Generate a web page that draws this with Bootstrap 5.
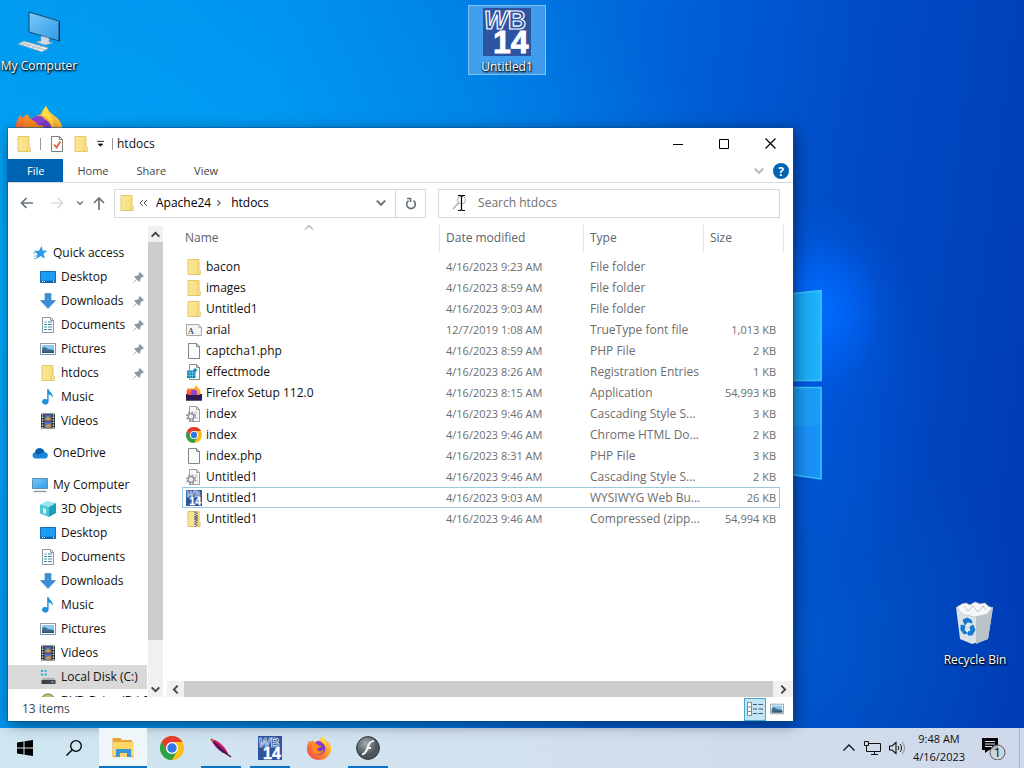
<!DOCTYPE html>
<html lang="en">
<head>
<meta charset="utf-8">
<meta name="viewport" content="width=device-width, initial-scale=1">
<title>htdocs</title>
<link href="https://cdn.jsdelivr.net/npm/bootstrap@5.3.0/dist/css/bootstrap.min.css" rel="stylesheet">
<style>
  body { font-family: "Open Sans", "Noto Sans", sans-serif; font-size: 12px; line-height: 16px; color: #111; }
  a { color: inherit; text-decoration: none; }
  svg { display: block; flex: none; }
  .i16 { width: 16px; height: 16px; }
  .i24 { width: 24px; height: 24px; }
  .i48 { width: 48px; height: 48px; }
  .plain { border: 0; padding: 0; background: none; color: inherit; display: flex; align-items: center; justify-content: center; }

  /* Desktop and wallpaper */
  .desktop {
    background:
      radial-gradient(ellipse 90px 110px at 820px 310px, rgba(0,108,255,1), rgba(0,104,255,.65) 35%, rgba(0,90,230,.2) 70%, rgba(0,80,220,0)),
      radial-gradient(ellipse 140px 190px at 800px 390px, rgba(0,100,240,.5), rgba(0,90,225,0)),
      radial-gradient(ellipse 240px 220px at 790px 640px, rgba(0,100,210,.5), rgba(0,90,210,0)),
      radial-gradient(ellipse 620px 420px at 150px 300px, rgba(0,176,255,.6), rgba(0,160,250,0)),
      linear-gradient(97deg, #0098ee 0%, #008eec 25%, #0079e2 45%, #005fd6 62%, #004cc6 78%, #003db6 97%);
  }
  .pane-light { left: 780px; top: 288px; width: 44px; height: 194px; }
  .shortcut { width: 78px; color: #fff; text-align: center; text-shadow: 1px 1px 2px #000, 0 1px 2px #000; display: flex; flex-direction: column; align-items: center; }
  .shortcut svg { text-shadow: none; }
  .sc-computer { left: 0; top: 7px; }
  .sc-firefox { left: 0; top: 106px; }
  .sc-project { left: 468px; top: 5px; height: 70px; padding-top: 2px; background: rgba(130,190,245,.5); border: 1px solid rgba(150,205,250,.75); }
  .sc-bin { right: 10px; top: 601px; }
  .shortcut span { line-height: 16px; margin-top: 3px; white-space: nowrap; }

  /* Explorer window */
  .explorer { inset: 128px 231px 7px 8px; background: #fff; box-shadow: 0 0 0 1px rgba(0,80,150,.5), 2px 3px 14px rgba(0,0,0,.5); }
  .titlebar { height: 31px; padding-left: 8px; }
  .sep { width: 1px; height: 12px; background: #999; }
  .caption { width: 46px; height: 30px; }
  .ribbon { height: 24px; border-bottom: 1px solid #d9dbdd; color: #444; font-size: 11px; }
  .ribbon a { padding: 0 14px; line-height: 24px; }
  .ribbon .file-tab { background: #0063b1; color: #fff; padding: 0 19px; line-height: 23px; height: 23px; }
  .address-row { height: 40px; padding: 0 13px 0 12px; }
  .field { height: 29px; border: 1px solid #d9d9d9; background: #fff; }
  .field-path { flex: 312 1 0; min-width: 0; }
  .field-search { flex: 342 1 0; min-width: 0; margin-left: 12px; }
  .field-search input { border: 0; outline: 0; padding: 0; min-width: 0; color: #6d6d6d; background: none; }
  .field-search input::placeholder { color: #6d6d6d; opacity: 1; }
  .search-mark { margin: 0 8px 0 13px; }
  .refresh { width: 30px; border-left: 1px solid #d9d9d9; }

  .tree { width: 139px; padding-top: 18px; }
  .tree a { display: flex; align-items: center; height: 24px; flex: none; padding: 0 3px 0 32px; gap: 5px; white-space: nowrap; }
  .tree .root { padding-left: 24px; gap: 5px; }
  .tree .gap-above { margin-top: 8px; }
  .tree .current { background: #d9d9d9; }
  .vbar { width: 15px; margin-left: 1px; background: #f0f0f0; margin-top: 3px; color: #444; }
  .vbar button { height: 16px; }
  .thumb { background: #cdcdcd; }
  .vbar .thumb { flex: 397; }
  .vbar .rest { flex: 41; }
  .hbar { height: 16px; margin: 0 0 0 4px; background: #f0f0f0; color: #444; }
  .hbar button { width: 17px; }
  .hbar button:last-child { width: 20px; }
  .files { table-layout: fixed; width: calc(100% - 32px); margin: 0 13px 0 19px; border-collapse: collapse; color: #6d6d6d; }
  .files th { height: 33px; padding: 0 0 3px 7px; font-weight: 400; color: #5a6470; background: linear-gradient(#e5e5e5, #e5e5e5) 0 2px / 1px 27px no-repeat; }
  .files th:first-child { padding-left: 3px; background: none; }
  .files th:last-child::after { content: ""; position: absolute; right: -4px; top: 2px; width: 1px; height: 27px; background: #e5e5e5; }
  .files td { height: 21px; padding: 0 0 0 7px; white-space: nowrap; }
  .files td:first-child { padding-left: 4px; color: #111; }
  .files td:nth-child(2), .files td:last-child, .clock { font-size: 11px; }
  .files td:last-child { text-align: right; padding-right: 4px; padding-left: 0; }
  .files .chosen { outline: 1px solid #99c9dc; outline-offset: -1px; }
  .files td a { display: flex; align-items: center; gap: 4px; }
  .sort-mark { left: calc(50% - 7px); top: 0; }
  .statusbar { height: 24px; padding: 0 5px 0 14px; color: #3a4656; }
  .view-btn { width: 22px; height: 23px; }
  .view-btn.on { background: #c2e6f5; border: 1px solid #4ba7cb; }

  /* Taskbar */
  .taskbar { height: 40px; background: linear-gradient(90deg, #cfe6f1, #d2e1ef 45%, #cfd8ea); }
  .task { width: 49px; height: 40px; position: relative; }
  .task.open::after { content: ""; position: absolute; left: 5px; right: 4px; bottom: 0; height: 2px; background: #0a74c9; }
  .task.active { background: #eef6fa; margin-left: 1px; width: 48px; }
  .task.active::after { left: 0; right: 0; }
  .clock { width: 60px; line-height: 18px; }
  .alerts { width: 50px; }
  .peek { width: 5px; border-left: 1px solid #a9b6c8; }
</style>
</head>
<body class="vh-100 d-flex flex-column overflow-hidden">

<svg width="0" height="0" class="position-absolute" aria-hidden="true">
  <defs>
    <linearGradient id="gFolder" x1="0" x2="1"><stop offset="0" stop-color="#fbe79a"/><stop offset="1" stop-color="#f7dc7c"/></linearGradient>
    <linearGradient id="gScreen" x1="0" y1="0" x2="1" y2="1"><stop offset="0" stop-color="#7cc8f8"/><stop offset="1" stop-color="#2f9be8"/></linearGradient>
    <linearGradient id="gFox" x1="1" y1="0" x2="0" y2="1"><stop offset="0" stop-color="#ffe24a"/><stop offset=".45" stop-color="#ff9a28"/><stop offset="1" stop-color="#f0334f"/></linearGradient>
    <radialGradient id="gFlash" cx=".4" cy=".3"><stop offset="0" stop-color="#a5adb2"/><stop offset="1" stop-color="#4b555c"/></radialGradient>
    <linearGradient id="gPane" x1="0" x2="1"><stop offset="0" stop-color="#149cf4"/><stop offset="1" stop-color="#20b4fa"/></linearGradient>
  </defs>
  <symbol id="folder" viewBox="0 0 16 16"><path d="M2 .5h11v10l1 1v4H2z" fill="url(#gFolder)" stroke="#e6c864" stroke-width="1"/><path d="M11.500 15.500v-4l1-1.500 1.500 1.500v4z" fill="#fbe9a4" stroke="#dfbc4e" stroke-width=".7"/></symbol>
  <symbol id="checkdoc" viewBox="0 0 16 16"><path d="M2.500.5h8l3 3v12h-11z" fill="#fff" stroke="#7d7d7d"/><path d="M10.500.5v3h3" fill="none" stroke="#7d7d7d"/><path d="M5 8.500l2.500 3 4-6" fill="none" stroke="#d9623b" stroke-width="1.800"/></symbol>
  <symbol id="star" viewBox="0 0 16 16"><path d="M9.500 1l1.100 4.600 4.900.1-4 2.900 1.300 5-4.300-2.700-4.200 3 1.200-5L2 5.700l5 .1z" fill="#2a98e4"/><path d="M1 8h3M2 11h3M2 13.500h3" stroke="#67b9ee"/></symbol>
  <symbol id="desk" viewBox="0 0 16 16"><path d="M.5 2.500h15v11H.5z" fill="#1e9bf5" stroke="#0b6fc0"/><path d="M1 12.500h14" stroke="#0a5a9d" stroke-width="1.500"/><path d="M2 12.500h1m1 0h1m8 0h1" stroke="#fff"/></symbol>
  <symbol id="down" viewBox="0 0 16 16"><path d="M5 .5h6v7h4.500L8 15.500.5 7.500H5z" fill="#3d8fd8" stroke="#2f7cc4" stroke-width=".6"/></symbol>
  <symbol id="doc" viewBox="0 0 16 16"><path d="M2.500.5h8l3 3v12h-11z" fill="#fff" stroke="#8a959c"/><path d="M10.500.5v3h3" fill="none" stroke="#8a959c"/><path d="M4.500 5h2M8 5h4M4 7.500h3M8 7.500h4M4 10h3m1 0h4M4 12.500h3m1 0h4" stroke="#3d8aa8" stroke-width="1.200"/></symbol>
  <symbol id="pic" viewBox="0 0 16 16"><path d="M.5 2.500h15v11H.5z" fill="#fff" stroke="#8b979e"/><path d="M2 4h12v8H2z" fill="#8ec9ee"/><path d="M2 7l3-1 3 2 6 1v3H2z" fill="#42718f"/><path d="M2 10.500h12V12H2z" fill="#28577a"/></symbol>
  <symbol id="note" viewBox="0 0 16 16"><path d="M7.200 0h1.400c.3 2.800 4.700 3.700 4 8.800-.7-2-2-3-4-3.200v7.200a3.300 2.800 0 1 1-1.400-2.300z" fill="#2091dc"/></symbol>
  <symbol id="film" viewBox="0 0 16 16"><path d="M1 .5h14v15H1z" fill="#33373b"/><path d="M4.500 1.500h7v6h-7z" fill="#4b68b5"/><path d="M4.500 8.500h7v6h-7z" fill="#5a6ebc"/><path d="M5 6l3-3 3 3v1.500H5zM5 13l3-2 3 1v2.500H5z" fill="#c39b4a"/><path d="M2.600 1v15M13.400 1v15" stroke="#eee" stroke-width="1.400" stroke-dasharray="1.300 1.300"/></symbol>
  <symbol id="cloud" viewBox="0 0 16 16"><path d="M3.500 13.500a3.200 3.200 0 0 1-.5-6.300A4.800 4.800 0 0 1 11.500 5c.5.700 1 1.400 1.100 2.300a3.100 3.100 0 0 1 .2 6.200z" fill="#1a86d9"/><path d="M3 7.200A4.800 4.800 0 0 1 11.500 5l.6 2L6 10z" fill="#0c5cab"/></symbol>
  <symbol id="pc" viewBox="0 0 16 16"><path d="M.5 1.500h15v10H.5z" fill="url(#gScreen)" stroke="#5d8fb5"/><path d="M1.500 14.500h13" stroke="#7f97a8" stroke-width="1.400"/></symbol>
  <symbol id="cube" viewBox="0 0 16 16"><path d="M0 3.500L7 0l9 2-7 4z" fill="#9de5ee"/><path d="M0 3.500L9 6v10l-9-3.500z" fill="#4cc5d9"/><path d="M9 6l7-4v10l-7 4z" fill="#1b9fb9"/><path d="M3 7l3 1v5l-3-1z" fill="#d5f6fa"/></symbol>
  <symbol id="disk" viewBox="0 0 16 16"><path d="M1 1h2v2H1zM4.500 1h2v2h-2zM1 4.500h2v2H1zM4.500 4.500h2v2h-2z" fill="#20b2dd"/><path d="M3 9h11l1.500 2H1.500z" fill="#a9afb3"/><path d="M1.500 11h14v4h-14z" fill="#3e454a"/><path d="M11 13h3" stroke="#c9d"/></symbol>
  <symbol id="dvd" viewBox="0 0 16 16"><circle cx="8" cy="8" r="7" fill="#b9c879" stroke="#6b7a3b"/><circle cx="8" cy="8" r="2.500" fill="#fff" stroke="#6b7a3b"/></symbol>
  <symbol id="pin" viewBox="0 0 12 12"><path d="M7.500 0L12 4.500l-1.200.9-1-.2L8 7.500 7.700 9.800l-1.200.7L4.200 8.200 1 11.500l-1 .3.400-1L3.800 7.800 1.500 5.500l.7-1.200 2.300-.3L6.800 2.200l-.2-1z" fill="#8c979e"/></symbol>
  <symbol id="font" viewBox="0 0 16 16"><path d="M.5 2.500h12l3 3v8H.5z" fill="#f4f4f4" stroke="#a8a8a8"/><path d="M12.500 2.500v3h3" fill="none" stroke="#bbb"/><text x="2" y="12" font-family="Liberation Serif, serif" font-weight="700" font-size="8" fill="#555">A</text></symbol>
  <symbol id="blank" viewBox="0 0 16 16"><path d="M2.500.5h8l3 3v12h-11z" fill="#fcfcfc" stroke="#858585"/><path d="M10.500.5v3h3" fill="none" stroke="#858585"/></symbol>
  <symbol id="reg" viewBox="0 0 16 16"><path d="M3.500.5h7l3 3v12h-10z" fill="#fff" stroke="#8a8a8a"/><path d="M10.500.5v3h3" fill="none" stroke="#8a8a8a"/><path d="M1 6.500h6l.5-1L9 4l2.500 2L9.500 8v6H1z" fill="#128ab8"/><path d="M1 9h8.500M1 11.500h8.500M3.700 6.500V14M6.500 6.500V14" stroke="#7fd0ec" stroke-width=".6"/></symbol>
  <symbol id="css" viewBox="0 0 16 16"><path d="M3.500.5h7l3 3v12h-10z" fill="#fafafa" stroke="#9c9c9c"/><path d="M10.500.5v3h3" fill="none" stroke="#9c9c9c"/><path d="M8.500 6h3M9.500 8h2M10 12h2" stroke="#bbb"/><circle cx="5" cy="10.500" r="4.200" fill="none" stroke="#8d9399" stroke-width="1.600" stroke-dasharray="1.900 1.400"/><circle cx="5" cy="10.500" r="2.800" fill="#eee" stroke="#8d9399" stroke-width="1.300"/></symbol>
  <symbol id="zip" viewBox="0 0 16 16"><path d="M2 .5h11v10l1 1v4H2z" fill="url(#gFolder)" stroke="#e0c05a"/><path d="M8 .5h4v15H8z" fill="#dad5c4"/><path d="M9.200.5v15M10.700 1.500v14" stroke="#555" stroke-width="1.500" stroke-dasharray="1.200 1.200"/><path d="M8.500 5h3v4h-3z" fill="#777"/></symbol>
  <symbol id="wb" viewBox="0 0 48 48"><path d="M0 0h48v48H0z" fill="#2e549f"/><g font-family="Liberation Sans, sans-serif" font-weight="700"><g font-size="25" fill="none" stroke="#fff" stroke-width="1.200"><text x="1" y="21" font-style="italic">W</text><text x="25" y="21">B</text></g><text x="10" y="45" font-size="32" fill="#fff" stroke="#fff" stroke-width=".8">14</text></g></symbol>
  <symbol id="chrome" viewBox="0 0 24 24"><circle cx="12" cy="12" r="12" fill="#fbc116"/><path d="M12 6h10.400A12 12 0 0 0 1.600 6l5.200 9z" fill="#e33b2e"/><path d="M1.600 6A12 12 0 0 0 12 24l5.200-9-5.200 3-5.200-3z" fill="#2ba24c"/><circle cx="12" cy="12" r="6" fill="#fff"/><circle cx="12" cy="12" r="4.700" fill="#2f78e8"/></symbol>
  <symbol id="fox" viewBox="0 0 24 24"><path d="M13 4C13.500 2 15 .8 15.500 0c1 2.600 2.800 3.600 4.300 5C22.500 6.500 24 10 24 13A12 11 0 0 1 0 13C0 9 1 6.500 2.800 4.500L3.500 6C4.500 5 5.700 4.500 6.500 4l.8 2.500z" fill="url(#gFox)"/><circle cx="12" cy="12.500" r="6.500" fill="#7a3fc9"/><path d="M8 6.500c1.500-1.500 4-2 6-1l1 2-4 2z" fill="#8c3fd6"/><path d="M5 8c2-2 5-1 6.500 1.500l3 .5c-1 2-4 1.500-4.500 3.500 1 2.500 5 2.500 7-.5-.5 4-4 6-7.500 5.200C6 17.500 4.500 13 5 8z" fill="#ff8a1f"/><path d="M13 5c3 0 5.500 3 5.500 6 1-2 .5-5-1-7L15.500 0z" fill="#ffdf45"/></symbol>
  <symbol id="foxsetup" viewBox="0 0 16 16"><path d="M0 9h16v6.500H0z" fill="#28184f"/><path d="M1 9C0 6 1 4 2.500 3l1 1L6 3l1.500 1L10 0c1 2 4 3.500 4.500 6 .4 2-.5 3-1 4H2z" fill="url(#gFox)"/><circle cx="8" cy="7.500" r="3" fill="#8c49d0"/><path d="M0 12c5-3 11-3 16 0v3.500H0z" fill="#2b1a55"/></symbol>
  <symbol id="chevU" viewBox="0 0 10 10"><path d="M1.500 7L5 3.500 8.500 7" fill="none" stroke="currentColor" stroke-width="1.700"/></symbol>
  <symbol id="chevD" viewBox="0 0 10 10"><path d="M1.500 3L5 6.500 8.500 3" fill="none" stroke="currentColor" stroke-width="1.700"/></symbol>
  <symbol id="chevL" viewBox="0 0 10 10"><path d="M7 1.500L3.500 5 7 8.500" fill="none" stroke="currentColor" stroke-width="1.700"/></symbol>
  <symbol id="chevR" viewBox="0 0 10 10"><path d="M3 1.500L6.500 5 3 8.500" fill="none" stroke="currentColor" stroke-width="1.700"/></symbol>
  <symbol id="arrowL" viewBox="0 0 14 14"><path d="M13 7H2M6.500 2L1.500 7l5 5" fill="none" stroke="currentColor" stroke-width="1.700"/></symbol>
  <symbol id="arrowR" viewBox="0 0 14 14"><path d="M1 7h11M7.500 2l5 5-5 5" fill="none" stroke="currentColor" stroke-width="1.700"/></symbol>
</svg>

<main class="desktop position-relative flex-grow-1">
  <svg class="pane-light position-absolute" viewBox="0 0 44 194" aria-hidden="true">
    <path d="M0 7L42 2v91H0z" fill="url(#gPane)"/><path d="M0 99h42v92L0 185z" fill="#1a90f8"/><path d="M0 99h42v38L0 139z" fill="#1c9cf6"/>
    <path d="M0 7L41 2.500V92.500H0M0 99.500h41V191L0 185" fill="none" stroke="#38c4fa" stroke-width="1.500"/>
  </svg>

  <a href="#" class="shortcut sc-computer position-absolute">
    <svg class="i48" viewBox="0 0 48 48" aria-hidden="true"><path d="M14 5l30 9v20l-30-9z" fill="url(#gScreen)" stroke="#1b4666" stroke-width="1"/><path d="M44 14l1 .5v20l-1-.5z" fill="#0d2a40"/><path d="M26 29l8 2v4l4 1-8 2-9-3 5-1z" fill="#cfdbe4" stroke="#8fa3b3" stroke-width=".5"/><path d="M9 34l25 7-7 4-24-8z" fill="#e6edf2" stroke="#8397a6" stroke-width=".7"/><path d="M7 36l23 7M12 35l-5 3M17 36l-5 3M22 38l-5 3M27 39l-5 3" stroke="#9aabb8" stroke-width=".7"/></svg>
    <span>My Computer</span>
  </a>
  <a href="#" class="shortcut sc-firefox position-absolute" aria-label="Firefox"><svg class="i48"><use href="#fox"/></svg></a>
  <a href="#" class="shortcut sc-project position-absolute"><svg class="i48"><use href="#wb"/></svg><span>Untitled1</span></a>
  <a href="#" class="shortcut sc-bin position-absolute">
    <svg class="i48" viewBox="0 0 48 48" aria-hidden="true"><path d="M5 6l20 5 17-5-5 32-16 5-12-5z" fill="#dce3e8"/><path d="M25 11l17-5-5 32-12 5z" fill="#b9c1c9"/><path d="M6 6l5-3 4-1 4 2 5-3 5 2 5-1 3 3 4 2-5 6-12 3-13-3z" fill="#f5f7f8" stroke="#bcc6cd" stroke-width=".7"/><path d="M13 5l4 5 5-5 5 6 5-6 3 4" fill="none" stroke="#b6c1ca"/><path d="M12 19l4-2 4 2 1 3-3-1-2 0-2 3zM10 24l4 1-1 4 3 3-3 1-3-4zM22 24l2 5-3 5-4 0 0-3 3-1-1-4z" fill="#1478d0" stroke="#1478d0"/></svg>
    <span>Recycle Bin</span>
  </a>

  <section class="explorer position-absolute d-flex flex-column" aria-label="htdocs">
    <header class="titlebar d-flex align-items-center flex-shrink-0">
      <svg class="i16"><use href="#folder"/></svg><span class="sep mx-2"></span>
      <button class="plain" aria-label="Properties"><svg class="i16"><use href="#checkdoc"/></svg></button>
      <button class="plain mx-1 ps-1" aria-label="New folder"><svg class="i16"><use href="#folder"/></svg></button>
      <button class="plain ms-1" aria-label="Customize toolbar"><svg width="7" height="8" viewBox="0 0 8 8"><path d="M0 1h8M1.500 4h5l-2.500 2.500z" stroke="#111" fill="#111"/></svg></button>
      <span class="sep ms-2 me-1"></span><span>htdocs</span>
      <div class="d-flex ms-auto">
        <button class="plain caption" aria-label="Minimize"><svg width="10" height="10"><path d="M0 5.500h10" stroke="#000"/></svg></button>
        <button class="plain caption" aria-label="Maximize"><svg width="10" height="10"><path d="M.5.5h9v9h-9z" fill="none" stroke="#000"/></svg></button>
        <button class="plain caption" aria-label="Close"><svg width="11" height="11"><path d="M.5.5l10 10m0-10l-10 10" stroke="#000" stroke-width="1.200"/></svg></button>
      </div>
    </header>
    <nav class="ribbon d-flex flex-shrink-0" aria-label="Ribbon">
      <a href="#" class="file-tab">File</a><a href="#">Home</a><a href="#">Share</a><a href="#">View</a>
      <div class="ms-auto d-flex align-items-center gap-2 pe-1">
        <button class="plain text-secondary opacity-50" aria-label="Expand ribbon"><svg width="12" height="12"><use href="#chevD"/></svg></button>
        <button class="plain" aria-label="Help"><svg class="i16" viewBox="0 0 16 16"><circle cx="8" cy="8" r="8" fill="#0063b1"/><text x="8" y="12.500" text-anchor="middle" font-size="12" font-weight="700" fill="#fff">?</text></svg></button>
      </div>
    </nav>

    <div class="address-row d-flex align-items-center flex-shrink-0 text-secondary">
      <button class="plain" aria-label="Back"><svg width="14" height="14"><use href="#arrowL"/></svg></button>
      <button class="plain ms-3 opacity-25" aria-label="Forward"><svg width="14" height="14"><use href="#arrowR"/></svg></button>
      <button class="plain ms-2 ps-1" aria-label="Recent locations"><svg width="8" height="8"><use href="#chevD"/></svg></button>
      <button class="plain mx-2" aria-label="Up"><svg width="14" height="14" viewBox="0 0 14 14"><path d="M7 14V2M2 7l5-5 5 5" fill="none" stroke="currentColor" stroke-width="1.700"/></svg></button>
      <div class="field field-path d-flex align-items-center">
        <svg class="i16 ms-1 me-1"><use href="#folder"/></svg>
        <svg width="9" height="8" viewBox="0 0 9 8"><path d="M4 1L1 4l3 3M8 1L5 4l3 3" fill="none" stroke="#555"/></svg>
        <a href="#" class="text-black ms-2">Apache24</a>
        <svg width="8" height="8" class="mx-1"><use href="#chevR"/></svg>
        <a href="#" class="text-black ms-1">htdocs</a>
        <button class="plain ms-auto me-2" aria-label="Previous locations"><svg width="12" height="12"><use href="#chevD"/></svg></button>
        <button class="plain refresh align-self-stretch" aria-label="Refresh"><svg width="12" height="13" viewBox="0 0 12 13"><path d="M3.500 3.800A4.300 4.300 0 1 0 8.500 3.800M2 1.500h3.500V5" fill="none" stroke="currentColor" stroke-width="1.700"/></svg></button>
      </div>
      <div class="field field-search d-flex align-items-center">
        <svg width="18" height="18" viewBox="0 0 18 18" class="search-mark" aria-hidden="true"><circle cx="9.500" cy="6" r="4" fill="none" stroke="#aaa"/><path d="M6.500 9L1 15" stroke="#aaa" stroke-width="1.300"/><path d="M6 1.500h2.500l1 1 1-1H13M9.500 2v14M6 16.500h2.500l1-1 1 1H13" fill="none" stroke="#000" stroke-width="1.200"/></svg>
        <input type="text" class="flex-grow-1" placeholder="Search htdocs" aria-label="Search htdocs">
      </div>
    </div>

    <div class="d-flex flex-grow-1 overflow-hidden">
      <nav class="tree d-flex flex-column flex-shrink-0 overflow-hidden" aria-label="Folders">
        <a href="#" class="root"><svg class="i16"><use href="#star"/></svg>Quick access</a>
        <a href="#"><svg class="i16"><use href="#desk"/></svg>Desktop<svg width="11" height="11" class="ms-auto"><use href="#pin"/></svg></a>
        <a href="#"><svg class="i16"><use href="#down"/></svg>Downloads<svg width="11" height="11" class="ms-auto"><use href="#pin"/></svg></a>
        <a href="#"><svg class="i16"><use href="#doc"/></svg>Documents<svg width="11" height="11" class="ms-auto"><use href="#pin"/></svg></a>
        <a href="#"><svg class="i16"><use href="#pic"/></svg>Pictures<svg width="11" height="11" class="ms-auto"><use href="#pin"/></svg></a>
        <a href="#"><svg class="i16"><use href="#folder"/></svg>htdocs<svg width="11" height="11" class="ms-auto"><use href="#pin"/></svg></a>
        <a href="#"><svg class="i16"><use href="#note"/></svg>Music</a>
        <a href="#"><svg class="i16"><use href="#film"/></svg>Videos</a>
        <a href="#" class="root gap-above"><svg class="i16"><use href="#cloud"/></svg>OneDrive</a>
        <a href="#" class="root gap-above"><svg class="i16"><use href="#pc"/></svg>My Computer</a>
        <a href="#"><svg class="i16"><use href="#cube"/></svg>3D Objects</a>
        <a href="#"><svg class="i16"><use href="#desk"/></svg>Desktop</a>
        <a href="#"><svg class="i16"><use href="#doc"/></svg>Documents</a>
        <a href="#"><svg class="i16"><use href="#down"/></svg>Downloads</a>
        <a href="#"><svg class="i16"><use href="#note"/></svg>Music</a>
        <a href="#"><svg class="i16"><use href="#pic"/></svg>Pictures</a>
        <a href="#"><svg class="i16"><use href="#film"/></svg>Videos</a>
        <a href="#" class="current"><svg class="i16"><use href="#disk"/></svg>Local Disk (C:)</a>
        <a href="#"><svg class="i16"><use href="#dvd"/></svg>DVD Drive (D:) F</a>
      </nav>
      <div class="vbar d-flex flex-column flex-shrink-0">
        <button class="plain" aria-label="Scroll up"><svg width="11" height="11"><use href="#chevU"/></svg></button>
        <div class="thumb"></div><div class="rest"></div>
        <button class="plain" aria-label="Scroll down"><svg width="11" height="11"><use href="#chevD"/></svg></button>
      </div>
      <div class="flex-grow-1 d-flex flex-column">
        <table class="files">
          <colgroup><col><col style="width:144px"><col style="width:120px"><col style="width:77px"></colgroup>
          <thead><tr>
            <th class="position-relative">Name<svg width="10" height="10" class="sort-mark position-absolute" viewBox="0 0 10 10"><path d="M1 6.500L5 2.500l4 4" fill="none" stroke="#777"/></svg></th>
            <th>Date modified</th><th>Type</th><th class="position-relative">Size</th>
          </tr></thead>
          <tbody>
            <tr><td><a href="#"><svg class="i16"><use href="#folder"/></svg>bacon</a></td><td>4/16/2023 9:23 AM</td><td>File folder</td><td></td></tr>
            <tr><td><a href="#"><svg class="i16"><use href="#folder"/></svg>images</a></td><td>4/16/2023 8:59 AM</td><td>File folder</td><td></td></tr>
            <tr><td><a href="#"><svg class="i16"><use href="#folder"/></svg>Untitled1</a></td><td>4/16/2023 9:03 AM</td><td>File folder</td><td></td></tr>
            <tr><td><a href="#"><svg class="i16"><use href="#font"/></svg>arial</a></td><td>12/7/2019 1:08 AM</td><td>TrueType font file</td><td>1,013 KB</td></tr>
            <tr><td><a href="#"><svg class="i16"><use href="#blank"/></svg>captcha1.php</a></td><td>4/16/2023 8:59 AM</td><td>PHP File</td><td>2 KB</td></tr>
            <tr><td><a href="#"><svg class="i16"><use href="#reg"/></svg>effectmode</a></td><td>4/16/2023 8:26 AM</td><td>Registration Entries</td><td>1 KB</td></tr>
            <tr><td><a href="#"><svg class="i16"><use href="#foxsetup"/></svg>Firefox Setup 112.0</a></td><td>4/16/2023 8:15 AM</td><td>Application</td><td>54,993 KB</td></tr>
            <tr><td><a href="#"><svg class="i16"><use href="#css"/></svg>index</a></td><td>4/16/2023 9:46 AM</td><td>Cascading Style S...</td><td>3 KB</td></tr>
            <tr><td><a href="#"><svg class="i16"><use href="#chrome"/></svg>index</a></td><td>4/16/2023 9:46 AM</td><td>Chrome HTML Do...</td><td>2 KB</td></tr>
            <tr><td><a href="#"><svg class="i16"><use href="#blank"/></svg>index.php</a></td><td>4/16/2023 8:31 AM</td><td>PHP File</td><td>3 KB</td></tr>
            <tr><td><a href="#"><svg class="i16"><use href="#css"/></svg>Untitled1</a></td><td>4/16/2023 9:46 AM</td><td>Cascading Style S...</td><td>2 KB</td></tr>
            <tr class="chosen"><td><a href="#"><svg class="i16"><use href="#wb"/></svg>Untitled1</a></td><td>4/16/2023 9:03 AM</td><td>WYSIWYG Web Bu...</td><td>26 KB</td></tr>
            <tr><td><a href="#"><svg class="i16"><use href="#zip"/></svg>Untitled1</a></td><td>4/16/2023 9:46 AM</td><td>Compressed (zipp...</td><td>54,994 KB</td></tr>
          </tbody>
        </table>
        <div class="hbar d-flex mt-auto">
          <button class="plain" aria-label="Scroll left"><svg width="11" height="11"><use href="#chevL"/></svg></button>
          <div class="thumb flex-grow-1"></div>
          <button class="plain" aria-label="Scroll right"><svg width="11" height="11"><use href="#chevR"/></svg></button>
        </div>
      </div>
    </div>

    <footer class="statusbar d-flex align-items-center flex-shrink-0">
      <span class="me-auto">13 items</span>
      <button class="plain view-btn on" aria-label="Details view"><svg width="16" height="14" viewBox="0 0 16 14"><path d="M.5.5h4v13h-4zM.5 5h4M.5 9.500h4" fill="#fff" stroke="#7b8a94"/><path d="M6 2.500h4m1.500 0H16M6 7h4m1.500 0H16M6 11.500h4m1.500 0H16" stroke="#4d5d68"/></svg></button>
      <button class="plain view-btn" aria-label="Large icons view"><svg width="14" height="14"><use href="#pic"/></svg></button>
    </footer>
  </section>
</main>

<footer class="taskbar d-flex flex-shrink-0">
  <button class="plain task" aria-label="Start"><svg class="i16" viewBox="0 0 16 16"><path d="M0 2.500L6.500 1.500v6H0zM7.500 1.300L16 0v7.500H7.500zM0 8.500h6.500v6L0 13.500zM7.500 8.500H16V16l-8.500-1.300z" fill="#000"/></svg></button>
  <button class="plain task" aria-label="Search"><svg class="i16" viewBox="0 0 16 16"><circle cx="10" cy="6" r="5.300" fill="none" stroke="#000" stroke-width="1.300"/><path d="M6.300 9.800L.5 15.500" stroke="#000" stroke-width="1.400"/></svg></button>
  <button class="plain task open active" aria-label="File Explorer"><svg class="i24" viewBox="0 0 24 24"><path d="M1.500 2h8l1.500 2h10v17h-19.500z" fill="#e8a33d"/><path d="M2 6h20.500v15H2z" fill="#ffd768"/><path d="M5 13h15v8h-4v-4H9v4H5z" fill="#3b97d3"/><path d="M2 19h3v2.500H2zM20 19h2.500v2.500H20z" fill="#f5c145"/></svg></button>
  <button class="plain task" aria-label="Chrome"><svg class="i24"><use href="#chrome"/></svg></button>
  <button class="plain task open" aria-label="Apache"><svg class="i24" viewBox="0 0 24 24"><path d="M2 3l4 1c6 3 11 8 13 14l-4-1C9 14 4 9 2 3z" fill="#d3145a"/><path d="M5 6c6 3 10 8 14 12l-5-1C9 14 6 10 5 6z" fill="#6b2291"/><path d="M2 3c5 6 11 12 20 18" fill="none" stroke="#4a0d3b" stroke-width="1.400"/><path d="M2 3l2 3 1-2z" fill="#f08a22"/></svg></button>
  <button class="plain task open" aria-label="WYSIWYG Web Builder"><svg class="i24"><use href="#wb"/></svg></button>
  <button class="plain task" aria-label="Firefox"><svg class="i24"><use href="#fox"/></svg></button>
  <button class="plain task open" aria-label="Flash"><svg class="i24" viewBox="0 0 24 24"><circle cx="12" cy="12" r="11.400" fill="url(#gFlash)" stroke="#2d353a"/><path d="M18 5c-5 0-5.500 4-6.500 7s-2 6-5.500 6.500M10.500 12H15" fill="none" stroke="#f2f5f6" stroke-width="2.200"/></svg></button>
  <div class="d-flex align-items-center ms-auto">
    <button class="plain me-2" aria-label="Hidden icons"><svg width="14" height="14" viewBox="0 0 14 14"><path d="M1.500 9.500L7 4l5.500 5.500" fill="none" stroke="#111" stroke-width="1.300"/></svg></button>
    <button class="plain me-2" aria-label="Network"><svg width="17" height="14" viewBox="0 0 17 14"><path d="M5 2.500h11.500v8H5M10.500 10.500v3M7 13.500h7M.5.500h4v4h-4zM2.500 4.500v6H5" fill="none" stroke="#111"/></svg></button>
    <button class="plain me-1" aria-label="Volume"><svg class="i16" viewBox="0 0 16 14"><path d="M.5 5h2.500l4-3.500v11L3 9H.5z" fill="none" stroke="#111" stroke-width="1.100"/><path d="M9 5c1 1.200 1 2.800 0 4M11 3c2 2.300 2 5.700 0 8" fill="none" stroke="#111"/><path d="M13.200 1c3 3.500 3 8.500 0 12" fill="none" stroke="#888"/></svg></button>
    <button class="plain clock flex-column"><span>9:48 AM</span><span>4/16/2023</span></button>
    <button class="plain alerts" aria-label="Notifications, 1 new"><svg width="24" height="24" viewBox="0 0 24 24"><path d="M0 2h16v12H7l-4 3v-3H0z" fill="#000"/><path d="M3 5.500h10M3 8h10M3 10.500h7" stroke="#dde5ee"/><circle cx="15.500" cy="16.500" r="7.500" fill="#cdd3da" fill-opacity=".85" stroke="#555"/><text x="15.500" y="21" text-anchor="middle" font-size="12" fill="#000">1</text></svg></button>
    <span class="peek align-self-stretch"></span>
  </div>
</footer>

<script src="https://cdn.jsdelivr.net/npm/bootstrap@5.3.0/dist/js/bootstrap.bundle.min.js"></script>
</body>
</html>
